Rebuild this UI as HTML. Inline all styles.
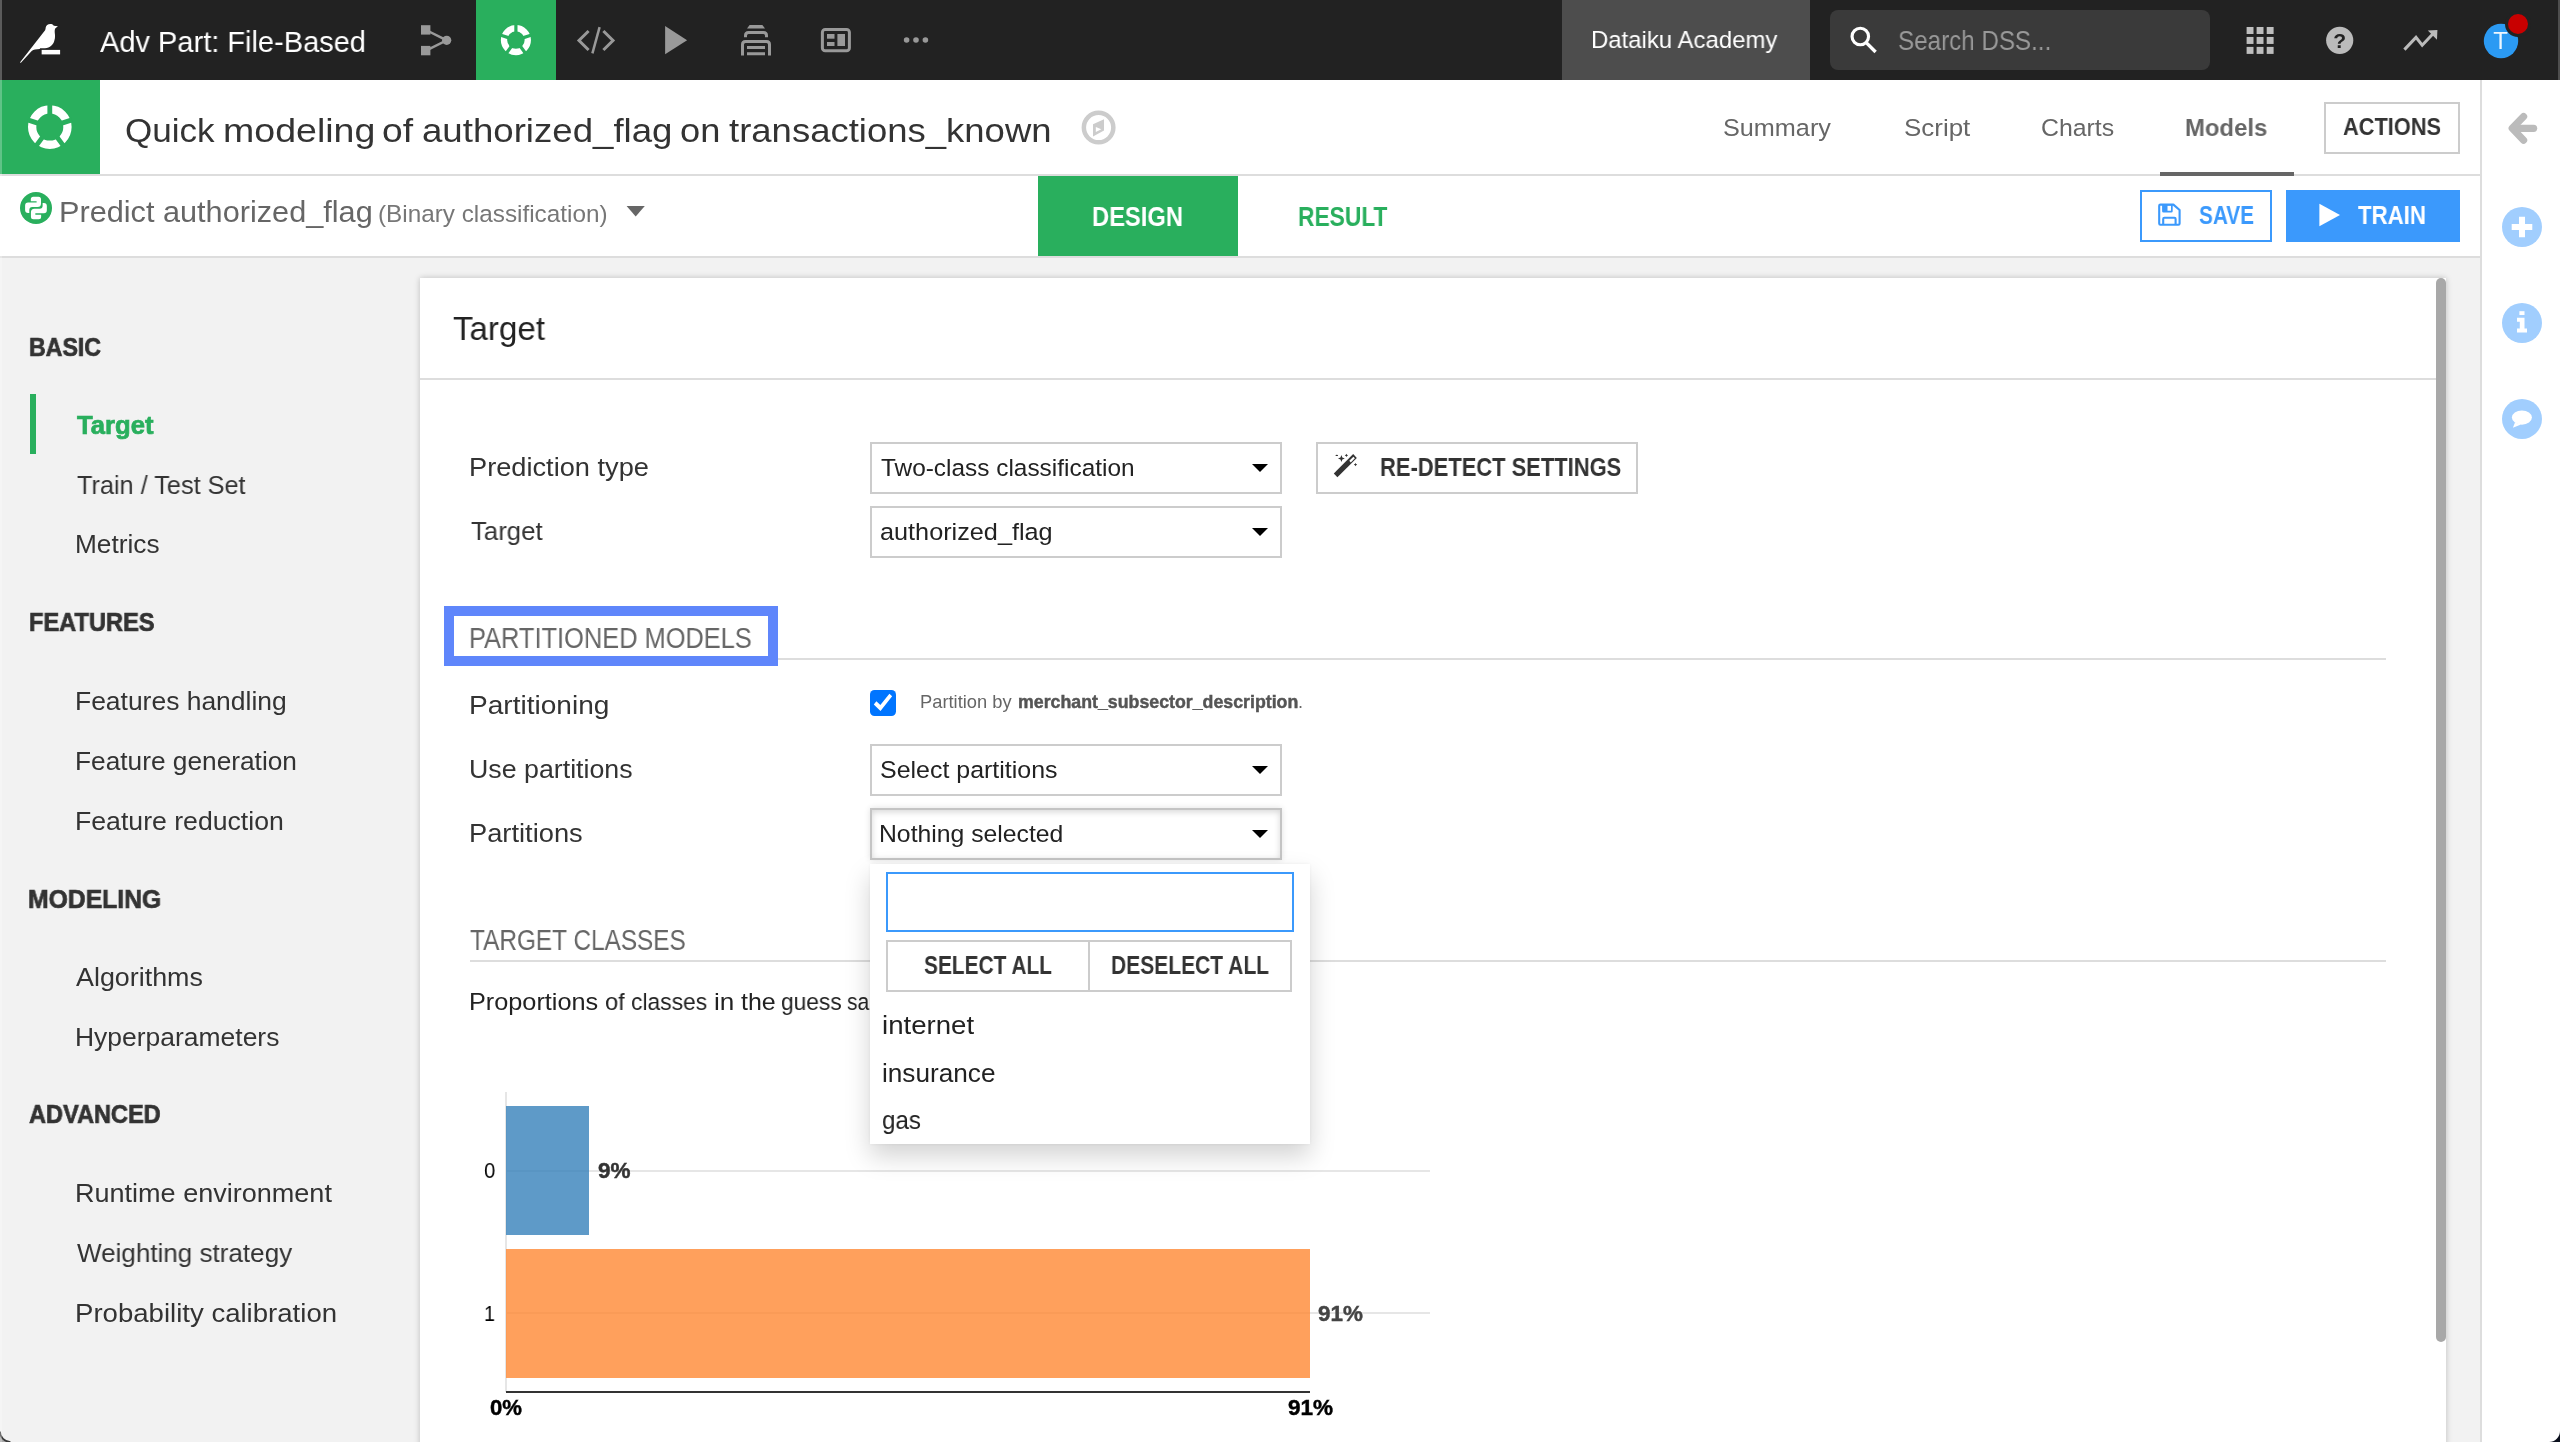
<!DOCTYPE html>
<html lang="en">
<head>
<meta charset="utf-8">
<title>Quick modeling of authorized_flag on transactions_known</title>
<style>
*{box-sizing:border-box;margin:0;padding:0}
html,body{width:2560px;height:1442px;overflow:hidden;background:#f2f2f2}
body{position:relative;font-family:"Liberation Sans",sans-serif;color:#333}
.abs{position:absolute}
.t{position:absolute;white-space:nowrap;line-height:1;transform-origin:0 0;will-change:transform}
.b{font-weight:700}
#nav{left:0;top:0;width:2560px;height:80px;background:#222}
#bar2{left:0;top:80px;width:2481px;height:96px;background:#fff;border-bottom:2px solid #ddd}
#bar3{left:0;top:176px;width:2481px;height:82px;background:#fff;border-bottom:2px solid #ddd}
#rpanel{left:2480px;top:80px;width:80px;height:1362px;background:#fff;border-left:2px solid #ddd}
#card{left:420px;top:278px;width:2026px;height:1180px;background:#fff;box-shadow:0 0 6px rgba(0,0,0,.22)}
.sel{position:absolute;left:870px;width:412px;height:52px;border:2px solid #ccc;background:#fff}
.sel i{position:absolute;right:12px;top:20px;width:0;height:0;border-left:8px solid transparent;border-right:8px solid transparent;border-top:8px solid #000}
.btn{position:absolute;border:2px solid #ccc;background:#fff}
.hr{position:absolute;height:2px;background:#ddd}
</style>
</head>
<body>
<!-- top nav -->
<div id="nav" class="abs"></div>
<div class="abs" style="left:476px;top:0;width:80px;height:80px;background:#29af5d"></div>
<div class="abs" style="left:1562px;top:0;width:248px;height:80px;background:#4d4d4d"></div>
<div class="abs" style="left:1830px;top:10px;width:380px;height:60px;background:#3a3a3a;border-radius:8px"></div>
<!-- bars -->
<div id="bar2" class="abs"></div>
<div class="abs" style="left:0;top:80px;width:100px;height:94px;background:#29af5d"></div>
<div id="bar3" class="abs"></div>
<div class="abs" style="left:2160px;top:172px;width:134px;height:4px;background:#666"></div>
<div class="btn" style="left:2324px;top:102px;width:136px;height:52px"></div>
<div class="abs" style="left:1038px;top:176px;width:200px;height:80px;background:#29af5d"></div>
<div class="abs" style="left:2140px;top:190px;width:132px;height:52px;border:2px solid #3b99fc;background:#fff"></div>
<div class="abs" style="left:2286px;top:190px;width:174px;height:52px;background:#3b99fc"></div>
<div id="rpanel" class="abs"></div>
<!-- sidebar active marker -->
<div class="abs" style="left:30px;top:394px;width:6px;height:60px;background:#29af5d"></div>
<!-- card -->
<div id="card" class="abs"></div>
<div class="hr" style="left:420px;top:378px;width:2016px"></div>
<div class="abs" style="left:2436px;top:278px;width:10px;height:1064px;background:#a8a8a8;border-radius:5px"></div>
<!-- form -->
<div class="sel" style="top:442px"><i></i></div>
<div class="sel" style="top:506px"><i></i></div>
<div class="btn" style="left:1316px;top:442px;width:322px;height:52px"></div>
<div class="hr" style="left:470px;top:658px;width:1916px"></div>
<div class="abs" style="left:444px;top:606px;width:334px;height:60px;border:10px solid #5f86fb;background:#fff"></div>
<div class="abs" style="left:870px;top:690px;width:26px;height:26px;border-radius:4.5px;background:#0075ff"></div>
<div class="sel" style="top:744px"><i></i></div>
<div class="sel" style="top:808px;border-color:#c4c4c4;box-shadow:inset 0 2px 6px rgba(0,0,0,.16),0 0 6px rgba(0,0,0,.12);background:#fff"><i></i></div>
<div class="hr" style="left:470px;top:960px;width:1916px"></div>
<!-- chart -->
<div class="abs" style="left:505px;top:1092px;width:2px;height:300px;background:#e6e6e6"></div>
<div class="abs" style="left:506px;top:1170px;width:924px;height:2px;background:#e6e6e6"></div>
<div class="abs" style="left:506px;top:1312px;width:924px;height:2px;background:#e6e6e6"></div>
<div class="abs" style="left:506px;top:1106px;width:83px;height:129px;background:rgba(54,129,186,.8)"></div>
<div class="abs" style="left:506px;top:1249px;width:804px;height:129px;background:rgba(255,136,51,.8)"></div>
<div class="abs" style="left:506px;top:1391px;width:804px;height:2px;background:#333"></div>
<div class="t" style="left:470.30px;top:926px;font-size:28.8px;transform:scaleX(0.8463);color:#666">TARGET CLASSES</div>
<div class="t" style="left:0;top:990px;font-size:24.31px;color:#222;height:24.31px;width:10px;will-change:auto"><span class="t" style="left:469.17px;top:0;transform:scaleX(1.0397)">Proportions</span> <span class="t" style="left:604.63px;top:0;transform:scaleX(0.9737)">of</span> <span class="t" style="left:631.46px;top:0;transform:scaleX(0.9415)">classes</span> <span class="t" style="left:714.33px;top:0;transform:scaleX(1.0733)">in</span> <span class="t" style="left:740.80px;top:0;transform:scaleX(1.0282)">the</span> <span class="t" style="left:780.86px;top:0;transform:scaleX(0.9358)">guess</span> <span class="t" style="left:847.20px;top:0;transform:scaleX(0.8605)">sample</span></div>
<!-- dropdown -->
<div class="abs" style="left:870px;top:864px;width:440px;height:280px;background:#fff;box-shadow:0 12px 24px rgba(0,0,0,.175),0 0 4px rgba(0,0,0,.06)"></div>
<div class="abs" style="left:886px;top:872px;width:408px;height:60px;border:2px solid #3b99fc;background:#fff"></div>
<div class="btn" style="left:886px;top:940px;width:204px;height:52px"></div>
<div class="btn" style="left:1088px;top:940px;width:204px;height:52px"></div>
<div class="t" style="left:100.00px;top:27px;font-size:29.92px;transform:scaleX(0.9698);color:#fff">Adv Part: File-Based</div>
<div class="t" style="left:1591.03px;top:28px;font-size:24.31px;transform:scaleX(0.9854);color:#fff">Dataiku Academy</div>
<div class="t" style="left:1897.94px;top:27px;font-size:28.05px;transform:scaleX(0.8627);color:#999">Search DSS...</div>
<div class="t" style="left:0;top:114px;font-size:33.66px;color:#333;height:33.66px;width:10px;will-change:auto"><span class="t" style="left:124.56px;top:0;transform:scaleX(1.0422)">Quick</span> <span class="t" style="left:223.37px;top:0;transform:scaleX(1.1151)">modeling</span> <span class="t" style="left:381.99px;top:0;transform:scaleX(1.1058)">of</span> <span class="t" style="left:422.01px;top:0;transform:scaleX(1.0882)">authorized_flag</span> <span class="t" style="left:679.52px;top:0;transform:scaleX(1.0773)">on</span> <span class="t" style="left:728.80px;top:0;transform:scaleX(1.0844)">transactions_known</span></div>
<div class="t" style="left:1723.21px;top:116px;font-size:24.31px;transform:scaleX(1.0380);color:#666">Summary</div>
<div class="t" style="left:1903.93px;top:116px;font-size:24.31px;transform:scaleX(1.0675);color:#666">Script</div>
<div class="t" style="left:2041.48px;top:116px;font-size:24.31px;transform:scaleX(1.0225);color:#666">Charts</div>
<div class="t b" style="left:2185.27px;top:116px;font-size:24.31px;transform:scaleX(0.9825);color:#666">Models</div>
<div class="t b" style="left:2343.00px;top:115px;font-size:24.0px;transform:scaleX(0.9075);color:#333">ACTIONS</div>
<div class="t" style="left:58.55px;top:197px;font-size:29.92px;transform:scaleX(1.0256);color:#666">Predict authorized_flag</div>
<div class="t" style="left:378.00px;top:202px;font-size:24.31px;transform:scaleX(0.9980);color:#777">(Binary classification)</div>
<div class="t b" style="left:1091.72px;top:204px;font-size:26.88px;transform:scaleX(0.8824);color:#fff">DESIGN</div>
<div class="t b" style="left:1297.55px;top:204px;font-size:26.88px;transform:scaleX(0.8479);color:#29af5d">RESULT</div>
<div class="t b" style="left:2198.80px;top:203px;font-size:24.96px;transform:scaleX(0.8326);color:#3b99fc">SAVE</div>
<div class="t b" style="left:2358.00px;top:203px;font-size:24.96px;transform:scaleX(0.8908);color:#fff">TRAIN</div>
<div class="t b" style="left:28.52px;top:334px;font-size:26.1px;transform:scaleX(0.8872);color:#333;-webkit-text-stroke:0.7px">BASIC</div>
<div class="t b" style="left:77.05px;top:413px;font-size:25.4px;transform:scaleX(1.0097);color:#29af5d;-webkit-text-stroke:0.7px">Target</div>
<div class="t" style="left:77.30px;top:472px;font-size:26.18px;transform:scaleX(0.9656);color:#333">Train / Test Set</div>
<div class="t" style="left:75.29px;top:531px;font-size:26.18px;transform:scaleX(1.0031);color:#333">Metrics</div>
<div class="t b" style="left:28.51px;top:609px;font-size:26.1px;transform:scaleX(0.9052);color:#333;-webkit-text-stroke:0.7px">FEATURES</div>
<div class="t" style="left:75.28px;top:688px;font-size:26.18px;transform:scaleX(1.0104);color:#333">Features handling</div>
<div class="t" style="left:75.29px;top:748px;font-size:26.18px;transform:scaleX(1.0037);color:#333">Feature generation</div>
<div class="t" style="left:75.26px;top:808px;font-size:26.18px;transform:scaleX(1.0180);color:#333">Feature reduction</div>
<div class="t b" style="left:28.48px;top:886px;font-size:26.1px;transform:scaleX(0.9474);color:#333;-webkit-text-stroke:0.7px">MODELING</div>
<div class="t" style="left:76.10px;top:964px;font-size:26.18px;transform:scaleX(1.0264);color:#333">Algorithms</div>
<div class="t" style="left:75.28px;top:1024px;font-size:26.18px;transform:scaleX(1.0110);color:#333">Hyperparameters</div>
<div class="t b" style="left:28.52px;top:1101px;font-size:26.1px;transform:scaleX(0.9027);color:#333;-webkit-text-stroke:0.7px">ADVANCED</div>
<div class="t" style="left:74.63px;top:1180px;font-size:26.18px;transform:scaleX(1.0328);color:#333">Runtime environment</div>
<div class="t" style="left:76.70px;top:1240px;font-size:26.18px;transform:scaleX(0.9945);color:#333">Weighting strategy</div>
<div class="t" style="left:74.59px;top:1300px;font-size:26.18px;transform:scaleX(1.0534);color:#333">Probability calibration</div>
<div class="t" style="left:453.00px;top:312px;font-size:33.66px;transform:scaleX(0.9831);color:#222">Target</div>
<div class="t" style="left:468.62px;top:454px;font-size:26.18px;transform:scaleX(1.0395);color:#333">Prediction type</div>
<div class="t" style="left:470.70px;top:518px;font-size:26.18px;transform:scaleX(0.9841);color:#333">Target</div>
<div class="t" style="left:881.00px;top:456px;font-size:24.31px;transform:scaleX(1.0041);color:#222">Two-class classification</div>
<div class="t" style="left:879.96px;top:520px;font-size:24.31px;transform:scaleX(1.0389);color:#222">authorized_flag</div>
<div class="t b" style="left:1379.62px;top:455px;font-size:24.96px;transform:scaleX(0.8789);color:#333">RE-DETECT SETTINGS</div>
<div class="t" style="left:469.24px;top:624px;font-size:28.8px;transform:scaleX(0.8823);color:#666">PARTITIONED MODELS</div>
<div class="t" style="left:468.86px;top:692px;font-size:26.18px;transform:scaleX(1.0724);color:#333">Partitioning</div>
<div class="t" style="left:920.49px;top:693px;font-size:18.23px;transform:scaleX(1.0052);color:#666">Partition by</div>
<div class="t b" style="left:1017.82px;top:694px;font-size:17.69px;transform:scaleX(1.0040);color:#555;-webkit-text-stroke:0.45px">merchant_subsector_description</div>
<div class="t" style="left:1298.20px;top:693px;font-size:18.14px;transform:scaleX(1.0000);color:#666">.</div>
<div class="t" style="left:468.95px;top:756px;font-size:26.18px;transform:scaleX(1.0227);color:#333">Use partitions</div>
<div class="t" style="left:879.97px;top:758px;font-size:24.31px;transform:scaleX(1.0267);color:#222">Select partitions</div>
<div class="t" style="left:469.42px;top:820px;font-size:26.18px;transform:scaleX(1.0420);color:#333">Partitions</div>
<div class="t" style="left:878.96px;top:822px;font-size:24.31px;transform:scaleX(1.0187);color:#222">Nothing selected</div>
<div class="t b" style="left:923.90px;top:953px;font-size:24.96px;transform:scaleX(0.8364);color:#333">SELECT ALL</div>
<div class="t b" style="left:1110.56px;top:953px;font-size:24.96px;transform:scaleX(0.8425);color:#333">DESELECT ALL</div>
<div class="t" style="left:881.95px;top:1012px;font-size:26.18px;transform:scaleX(1.0549);color:#222">internet</div>
<div class="t" style="left:882.00px;top:1060px;font-size:26.18px;transform:scaleX(0.9989);color:#222">insurance</div>
<div class="t" style="left:882.08px;top:1107px;font-size:26.18px;transform:scaleX(0.9243);color:#222">gas</div>
<div class="t" style="left:484.30px;top:1160px;font-size:22.32px;transform:scaleX(0.9167);color:#000">0</div>
<div class="t b" style="left:597.53px;top:1160px;font-size:21.65px;transform:scaleX(1.0386);color:#333;-webkit-text-stroke:0.45px">9%</div>
<div class="t" style="left:484.42px;top:1303px;font-size:22.32px;transform:scaleX(0.8818);color:#000">1</div>
<div class="t b" style="left:1318.43px;top:1303px;font-size:21.65px;transform:scaleX(1.0340);color:#444;-webkit-text-stroke:0.45px">91%</div>
<div class="t b" style="left:490.13px;top:1397px;font-size:21.65px;transform:scaleX(1.0227);color:#000;-webkit-text-stroke:0.45px">0%</div>
<div class="t b" style="left:1287.63px;top:1397px;font-size:21.65px;transform:scaleX(1.0409);color:#000;-webkit-text-stroke:0.45px">91%</div>
<svg class="abs" style="left:0;top:0;will-change:transform" width="2560" height="1442" viewBox="0 0 2560 1442" font-family="Liberation Sans, sans-serif">
<!-- bird -->
<g fill="#fff">
<path d="M57.96 26.23 L53.9 25.65 C52.9 24.3 51.6 23.9 50.4 23.9 C47.8 23.9 45.9 25.6 45.7 27.6 C45.6 28.8 45.5 29.6 45.1 30.3 L19.9 62.5 L20.9 62.7 L31.7 50.9 C33.5 49.6 36 49.3 39.9 49.1 L39.9 48.2 L44.95 48.2 C47.5 48 49.6 47.2 51.2 45.8 C53 44.2 54 42.6 54.3 40.8 C54.9 39 55.1 37.4 55.05 35.7 C55 33.8 54.6 32.4 54.7 30.7 C54.8 29.6 55 28.8 55.4 28.2 Z"/>
<rect x="41.65" y="49.9" width="18.45" height="4.5"/>
</g>
<!-- flow icon -->
<g fill="#999" stroke="#999">
<rect x="421" y="25.2" width="9.4" height="9.4" stroke="none"/>
<rect x="421" y="45.9" width="9.4" height="9.4" stroke="none"/>
<circle cx="446.7" cy="40.3" r="4.6" stroke="none"/>
<path d="M426 30 L446.7 40.3 L426 50.6" fill="none" stroke-width="2.5"/>
</g>
<!-- ring icons -->
<circle cx="515.9" cy="40.1" r="11.91" fill="none" stroke="#fff" stroke-width="6.30"/>
<path d="M515.90 32.84L515.90 23.54M522.80 37.86L531.65 34.98M520.17 45.97L525.63 53.50M511.63 45.97L506.17 53.50M509.00 37.86L500.15 34.98" stroke="#29af5d" stroke-width="3.2" fill="none"/>
<circle cx="49.8" cy="127.1" r="17.65" fill="none" stroke="#fff" stroke-width="8.30"/>
<path d="M49.80 115.10L49.80 103.80M61.21 123.39L71.96 119.90M56.85 136.81L63.50 145.95M42.75 136.81L36.10 145.95M38.39 123.39L27.64 119.90" stroke="#29af5d" stroke-width="4.8" fill="none"/>
<!-- code icon -->
<g fill="none" stroke="#999" stroke-width="3">
<path d="M588.6 31 L579 40.5 L588.6 50"/>
<path d="M599.6 27.2 L592.4 53.4" stroke-width="2.5"/>
<path d="M603.4 31 L613 40.5 L603.4 50"/>
</g>
<!-- play -->
<path d="M665.1 26.1 L687.1 40.2 L665.1 54.3 Z" fill="#999"/>
<!-- jobs icon -->
<g fill="none" stroke="#999" stroke-width="3">
<path d="M747 28.5 L749.6 25 H762.4 L765 28.5 Z" fill="#999" stroke="none"/>
<path d="M745.5 37.2 V35.5 Q745.5 32.5 748.5 32.5 H763.5 Q766.5 32.5 766.5 35.5 V37.2"/>
<path d="M742.5 55.4 V44.5 Q742.5 41.5 745.5 41.5 H766.5 Q769.5 41.5 769.5 44.5 V55.4"/>
<path d="M747 47.55 H765 M747 53.8 H765" stroke-width="3"/>
</g>
<!-- dashboard icon -->
<g>
<rect x="822.4" y="29.5" width="27" height="21.3" rx="2.8" fill="none" stroke="#999" stroke-width="3"/>
<rect x="827" y="34" width="7.5" height="4.7" fill="#999"/>
<rect x="827" y="42" width="7.5" height="4" fill="#999"/>
<rect x="837.4" y="34" width="7.6" height="12" fill="#999"/>
</g>
<!-- dots -->
<g fill="#999"><circle cx="906.6" cy="40" r="2.8"/><circle cx="916" cy="40" r="2.8"/><circle cx="925.4" cy="40" r="2.8"/></g>
<!-- search -->
<g fill="none" stroke="#fff" stroke-width="3.15">
<circle cx="1860.3" cy="36.45" r="8.25"/>
<path d="M1866 42.4 L1875.6 52" stroke-width="3.4"/>
</g>
<!-- grid -->
<g fill="#bebebe">
<rect x="2246.6" y="27" width="6.9" height="7"/><rect x="2256.6" y="27" width="6.9" height="7"/><rect x="2266.7" y="27" width="6.9" height="7"/>
<rect x="2246.6" y="36.95" width="6.9" height="7"/><rect x="2256.6" y="36.95" width="6.9" height="7"/><rect x="2266.7" y="36.95" width="6.9" height="7"/>
<rect x="2246.6" y="46.9" width="6.9" height="7"/><rect x="2256.6" y="46.9" width="6.9" height="7"/><rect x="2266.7" y="46.9" width="6.9" height="7"/>
</g>
<!-- help -->
<circle cx="2339.7" cy="40.3" r="13.6" fill="#bbb"/>
<text x="2339.7" y="48" text-anchor="middle" font-size="21" font-weight="700" fill="#222">?</text>
<!-- trend -->
<g fill="none" stroke="#bbb" stroke-width="3"><path d="M2404.4 49.6 L2416 37.4 L2422.2 45.2 L2433 33.8"/></g>
<path d="M2427.8 30.4 L2437.4 30 L2437 39.8 Z" fill="#bbb"/>
<!-- avatar -->
<circle cx="2501" cy="41" r="17.2" fill="#2b9af3"/>
<text x="2500.6" y="49.4" text-anchor="middle" font-size="24" fill="#fff" fill-opacity=".92">T</text>
<circle cx="2518" cy="24" r="11.5" fill="#c80000" stroke="#222" stroke-width="3"/>
<!-- compass -->
<circle cx="1098.6" cy="127.6" r="14.75" fill="none" stroke="#ccc" stroke-width="4.5"/>
<path d="M1093 124.15 L1104 119.15 L1104 130.45 L1093 136.45 Z" fill="#ccc"/>
<path d="M1095.8 127 L1101.3 129.3 L1095.8 132 Z" fill="#fff"/>
<!-- python circle -->
<circle cx="36" cy="207.95" r="16" fill="#29af5d"/>
<g fill="#fff">
<path id="py" d="M33.3 196.8 H38.5 Q41 196.8 41 199.3 V203.6 Q41 207.1 37.5 207.1 H32.3 Q29.3 207.1 29.3 210.1 V213 H28.1 Q25.1 213 25.1 210 V205.6 Q25.1 202.6 28.1 202.6 H36.6 V201.3 H30.8 V199.3 Q30.8 196.8 33.3 196.8 Z"/>
<path d="M33.3 196.8 H38.5 Q41 196.8 41 199.3 V203.6 Q41 207.1 37.5 207.1 H32.3 Q29.3 207.1 29.3 210.1 V213 H28.1 Q25.1 213 25.1 210 V205.6 Q25.1 202.6 28.1 202.6 H36.6 V201.3 H30.8 V199.3 Q30.8 196.8 33.3 196.8 Z" transform="rotate(180 35.97 207.97)"/>
</g>
<!-- caret for title -->
<path d="M626.6 206 H644.8 L635.7 216.4 Z" fill="#666"/>
<!-- save icon -->
<g fill="none" stroke="#3b99fc" stroke-width="2.1" stroke-linejoin="round">
<path d="M2160.4 204.6 H2173.4 L2179.6 210 V223.6 Q2179.6 224.8 2178.4 224.8 H2160.4 Q2159.2 224.8 2159.2 223.6 V205.8 Q2159.2 204.6 2160.4 204.6 Z"/>
<path d="M2163.2 224.8 V219 Q2163.2 217.8 2164.4 217.8 H2174.4 Q2175.6 217.8 2175.6 219 V224.8"/>
<path d="M2162.1 204.6 H2172.7 V211.2 Q2172.7 212.6 2171.3 212.6 H2163.5 Q2162.1 212.6 2162.1 211.2 Z M2167.5 205.4 V210.8 H2171 V205.4 Z" fill="#3b99fc" fill-rule="evenodd" stroke="none"/>
</g>
<!-- train play -->
<path d="M2319.4 203.8 L2340 215 L2319.4 226.2 Z" fill="#fff"/>
<!-- right panel arrow -->
<g fill="none" stroke="#bbb" stroke-width="7.2" stroke-linecap="round" stroke-linejoin="round">
<path d="M2533.6 128.35 H2514"/><path d="M2523.6 116.5 L2512.2 128.35 L2523.6 140.2"/>
</g>
<!-- plus -->
<circle cx="2522" cy="227" r="20" fill="#a1cefe"/>
<path d="M2511.7 227 H2532.3 M2522 216.7 V237.3" stroke="#fff" stroke-width="6" fill="none"/>
<!-- info -->
<circle cx="2522" cy="323" r="20" fill="#a1cefe"/>
<g fill="#fff"><rect x="2519.4" y="311.2" width="5.1" height="3.8"/><path d="M2517 317.8 H2524.5 V328.6 H2527 V332.6 H2517 V328.6 H2519.8 V321.8 H2517 Z"/></g>
<!-- chat -->
<circle cx="2522" cy="418.9" r="20" fill="#a1cefe"/>
<ellipse cx="2521.9" cy="417.6" rx="10" ry="7.1" fill="#fff"/>
<path d="M2515 422.4 L2512.9 427.8 L2521 424.4 Z" fill="#fff"/>
<!-- wand -->
<g fill="#333">
<path d="M1333.8 473.5 L1337.4 477.3 L1356.8 457.9 L1353.2 454 Z"/>
<path d="M1349.3 460.8 L1350.8 462.4 L1354.9 458.3 L1353.4 456.7 Z" fill="#fff"/>
<path d="M1341.4 455.1 L1342.35 457.55 L1344.8000000000002 458.5 L1342.35 459.45 L1341.4 461.9 L1340.45 459.45 L1338.0 458.5 L1340.45 457.55 Z"/>
<path d="M1346.4 453.7 L1347.00 454.80 L1348.1000000000001 455.4 L1347.00 456.00 L1346.4 457.09999999999997 L1345.81 456.00 L1344.7 455.4 L1345.81 454.80 Z"/>
<path d="M1355.5 462.90000000000003 L1356.10 464.00 L1357.2 464.6 L1356.10 465.20 L1355.5 466.3 L1354.90 465.20 L1353.8 464.6 L1354.90 464.00 Z"/>
<ellipse cx="1336.8" cy="455.4" rx="1.3" ry="0.7"/>
</g>
<!-- checkbox mark -->
<path d="M873.8 704.6 L876.4 701.2 L880.35 705 L889.4 693.8 L892.15 696.3 L880.5 711.1 Z" fill="#fff"/>
<!-- window corners -->
<path d="M0 1442 V1431.5 A10.5 10.5 0 0 0 10.5 1442 Z" fill="#a8a8a8"/>
<path d="M0 1431.5 A10.5 10.5 0 0 0 10.5 1442" fill="none" stroke="#3a3a3a" stroke-width="1.6"/>
<path d="M2560 1442 V1431 A11 11 0 0 1 2549 1442 Z" fill="#0a0f1c"/>
</svg>

<div id="rstrip" class="abs" style="left:2558px;top:0;width:2px;height:80px;background:rgba(255,255,255,.2)"></div>
<div id="lstrip" class="abs" style="left:0;top:0;width:2px;height:1442px;background:rgba(255,255,255,.26)"></div>
</body>
</html>
